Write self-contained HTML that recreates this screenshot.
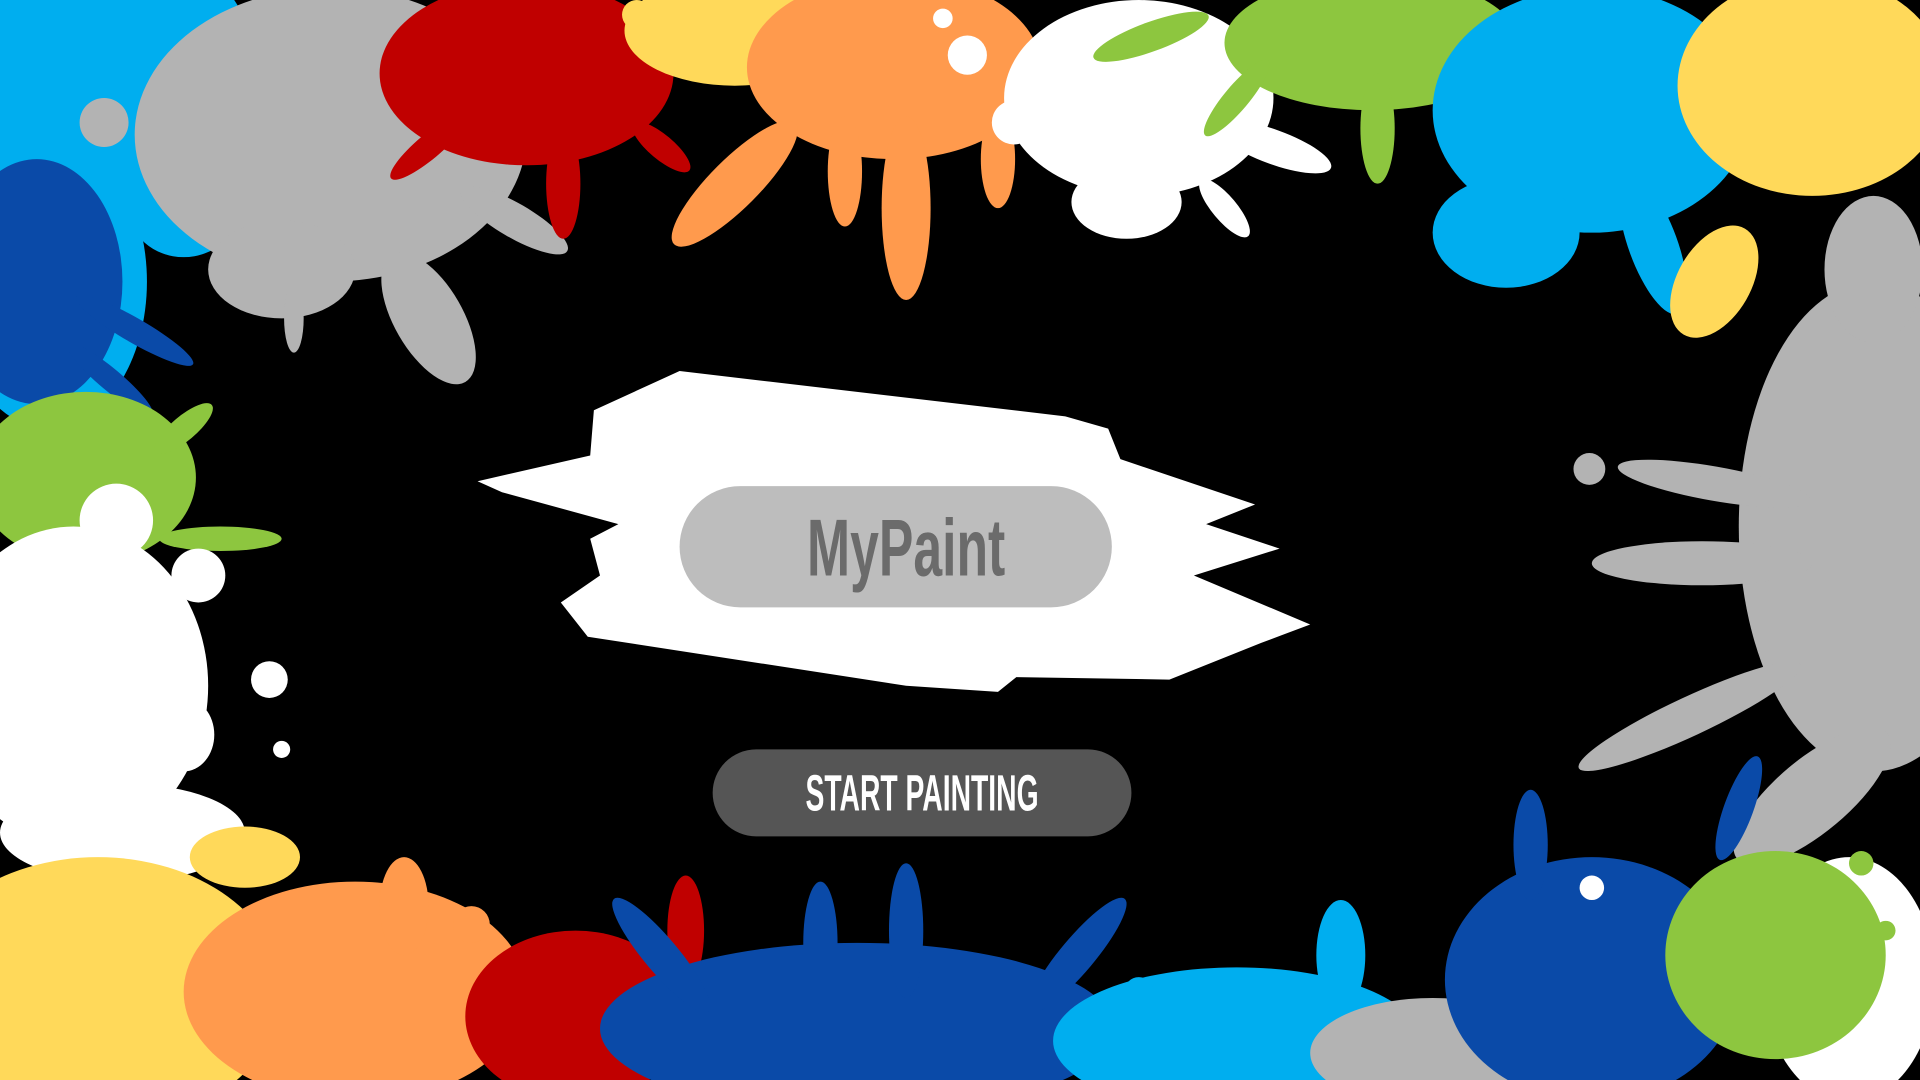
<!DOCTYPE html>
<html><head><meta charset="utf-8"><style>
html,body{margin:0;padding:0;background:#000;overflow:hidden}
svg{display:block}
</style></head><body>
<svg width="1920" height="1080" viewBox="0 0 1568 882" preserveAspectRatio="none" xmlns="http://www.w3.org/2000/svg">
<rect width="1568" height="882" fill="#000"/>
<g fill="#00aeef">
<ellipse cx="70" cy="60" rx="140" ry="120"/><ellipse cx="40" cy="230" rx="80" ry="120"/>
<ellipse cx="150" cy="170" rx="45" ry="40"/>
</g>
<g fill="#0a4aa8"><ellipse cx="30" cy="230" rx="70" ry="100"/><ellipse cx="110" cy="270" rx="55" ry="10" transform="rotate(30 110 270)"/><ellipse cx="90" cy="310" rx="45" ry="9" transform="rotate(40 90 310)"/></g>
<g fill="#b3b3b3">
<ellipse cx="270" cy="110" rx="160" ry="120"/><ellipse cx="230" cy="220" rx="60" ry="40"/>
<ellipse cx="350" cy="260" rx="28" ry="60" transform="rotate(-30 350 260)"/>
<ellipse cx="420" cy="180" rx="50" ry="14" transform="rotate(30 420 180)"/>
<ellipse cx="240" cy="260" rx="8" ry="28"/><circle cx="85" cy="100" r="20"/>
</g>
<g fill="#c00000">
<ellipse cx="430" cy="60" rx="120" ry="75"/><ellipse cx="460" cy="150" rx="14" ry="45"/>
<ellipse cx="350" cy="120" rx="40" ry="10" transform="rotate(-40 350 120)"/>
<ellipse cx="540" cy="120" rx="30" ry="10" transform="rotate(40 540 120)"/>
</g>
<g fill="#ffd95a"><ellipse cx="600" cy="25" rx="90" ry="45"/><circle cx="520" cy="12" r="12"/></g>
<g fill="#ff9a4d">
<ellipse cx="730" cy="55" rx="120" ry="75"/><ellipse cx="740" cy="170" rx="20" ry="75"/>
<ellipse cx="600" cy="150" rx="70" ry="20" transform="rotate(-45 600 150)"/>
<ellipse cx="690" cy="140" rx="14" ry="45"/><ellipse cx="815" cy="130" rx="14" ry="40"/>
<ellipse cx="860" cy="110" rx="30" ry="12" transform="rotate(40 860 110)"/>
</g>
<g fill="#fff"><circle cx="790" cy="45" r="16"/><circle cx="770" cy="15" r="8"/><circle cx="828" cy="100" r="18"/></g>
<g fill="#fff">
<ellipse cx="930" cy="80" rx="110" ry="80"/><ellipse cx="920" cy="165" rx="45" ry="30"/>
<ellipse cx="1000" cy="170" rx="30" ry="10" transform="rotate(50 1000 170)"/>
<ellipse cx="1040" cy="120" rx="50" ry="14" transform="rotate(20 1040 120)"/>
</g>
<g fill="#8dc63f">
<ellipse cx="1120" cy="35" rx="120" ry="55"/><ellipse cx="1125" cy="105" rx="14" ry="45"/>
<ellipse cx="940" cy="30" rx="50" ry="12" transform="rotate(-20 940 30)"/>
<ellipse cx="1010" cy="80" rx="40" ry="10" transform="rotate(-50 1010 80)"/>
</g>
<g fill="#00aeef">
<ellipse cx="1300" cy="90" rx="130" ry="100"/><ellipse cx="1230" cy="190" rx="60" ry="45"/>
<ellipse cx="1350" cy="200" rx="20" ry="60" transform="rotate(-20 1350 200)"/>
</g>
<g fill="#ffd95a"><ellipse cx="1480" cy="70" rx="110" ry="90"/><ellipse cx="1400" cy="230" rx="30" ry="50" transform="rotate(30 1400 230)"/></g>
<g fill="#b3b3b3">
<ellipse cx="1530" cy="430" rx="110" ry="200"/><ellipse cx="1390" cy="460" rx="90" ry="18"/>
<ellipse cx="1400" cy="395" rx="80" ry="14" transform="rotate(10 1400 395)"/>
<ellipse cx="1380" cy="585" rx="100" ry="16" transform="rotate(-25 1380 585)"/>
<ellipse cx="1480" cy="650" rx="80" ry="30" transform="rotate(-40 1480 650)"/>
<circle cx="1298" cy="383" r="13"/><ellipse cx="1530" cy="220" rx="40" ry="60"/>
</g>
<g fill="#8dc63f"><ellipse cx="70" cy="390" rx="90" ry="70"/><ellipse cx="180" cy="440" rx="50" ry="10"/><ellipse cx="150" cy="350" rx="30" ry="10" transform="rotate(-40 150 350)"/></g>
<g fill="#fff">
<ellipse cx="60" cy="560" rx="110" ry="130"/><ellipse cx="100" cy="680" rx="100" ry="40"/>
<circle cx="162" cy="470" r="22"/><circle cx="220" cy="555" r="15"/><circle cx="230" cy="612" r="7"/>
<ellipse cx="150" cy="600" rx="25" ry="30"/><circle cx="95" cy="425" r="30"/>
</g>
<g fill="#ffd95a"><ellipse cx="80" cy="810" rx="150" ry="110"/><ellipse cx="200" cy="700" rx="45" ry="25"/></g>
<g fill="#ff9a4d"><ellipse cx="290" cy="810" rx="140" ry="90"/><ellipse cx="330" cy="740" rx="20" ry="40"/><circle cx="385" cy="755" r="15"/></g>
<g fill="#c00000"><ellipse cx="470" cy="830" rx="90" ry="70"/><ellipse cx="560" cy="760" rx="15" ry="45"/></g>
<g fill="#0a4aa8">
<ellipse cx="700" cy="840" rx="210" ry="70"/><ellipse cx="740" cy="760" rx="14" ry="55"/>
<ellipse cx="670" cy="770" rx="14" ry="50"/><ellipse cx="540" cy="780" rx="60" ry="14" transform="rotate(50 540 780)"/>
<ellipse cx="880" cy="780" rx="60" ry="14" transform="rotate(-50 880 780)"/>
</g>
<g fill="#00aeef"><ellipse cx="1010" cy="850" rx="150" ry="60"/><ellipse cx="1095" cy="780" rx="20" ry="45"/><circle cx="930" cy="810" r="12"/></g>
<g fill="#b3b3b3"><ellipse cx="1170" cy="860" rx="100" ry="45"/></g>
<g fill="#0a4aa8">
<ellipse cx="1300" cy="800" rx="120" ry="100"/><ellipse cx="1250" cy="690" rx="14" ry="45"/>
<ellipse cx="1420" cy="660" rx="12" ry="45" transform="rotate(20 1420 660)"/>
</g>
<circle cx="1300" cy="725" r="10" fill="#fff"/>
<g fill="#fff"><ellipse cx="1510" cy="800" rx="70" ry="100"/></g>
<g fill="#8dc63f"><ellipse cx="1450" cy="780" rx="90" ry="85"/><circle cx="1520" cy="705" r="10"/><circle cx="1540" cy="760" r="8"/></g>
<path fill="#fff" d="M390 393 L482 372 L485 335 L555 303 L870 340 L905 350 L915 375 L1025 412 L985 428 L1045 448 L975 470 L1070 510 L1030 525 L955 555 L830 553 L815 565 L740 560 L480 520 L458 492 L490 470 L482 440 L505 428 L410 402 Z"/>
<rect x="555" y="397" width="353" height="99" rx="49.5" fill="#bdbdbd"/>
<g transform="translate(740 470) scale(0.64 1)"><text x="0" y="0" text-anchor="middle" font-family="'Liberation Sans',sans-serif" font-weight="bold" font-size="66" fill="#6b6b6b">MyPaint</text></g>
<rect x="582" y="612" width="342" height="71" rx="35.5" fill="#555"/>
<g transform="translate(753 662) scale(0.55 1)"><text x="0" y="0" text-anchor="middle" font-family="'Liberation Sans',sans-serif" font-weight="bold" font-size="42" fill="#fff">START PAINTING</text></g>
</svg>
</body></html>
